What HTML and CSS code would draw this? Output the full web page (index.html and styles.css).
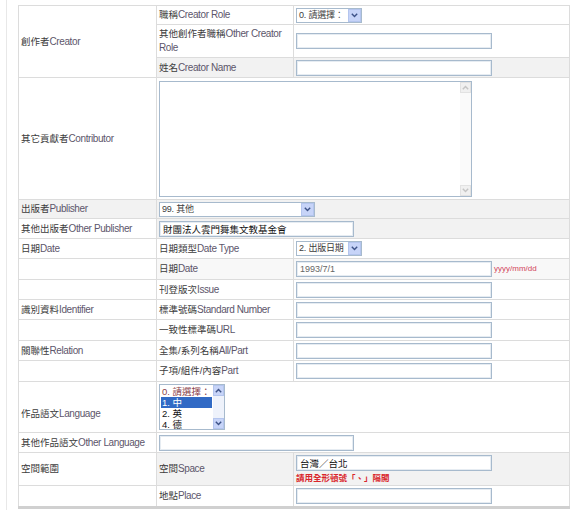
FILE: index.html
```html
<!DOCTYPE html>
<html lang="zh-Hant">
<head>
    <meta charset="UTF-8">
    <title>作品資料</title>
    <link rel="stylesheet" href="styles.css">
</head>
<body>
<div class="page">
    <table class="form-table">
        <colgroup><col class="c1"><col class="c2"><col class="c3"></colgroup>
        <!-- 創作者 -->
        <tr class="r19">
            <td rowspan="3">創作者<span class="en">Creator</span></td>
            <td>職稱<span class="en">Creator Role</span></td>
            <td>
                <div class="select w66"><span class="val">0. 請選擇：</span><span class="arrow"><svg width="7" height="5" viewBox="0 0 7 5"><path d="M0.8 0.8 L3.5 3.6 L6.2 0.8" fill="none" stroke="#3d5287" stroke-width="1.4"/></svg></span></div>
            </td>
        </tr>
        <tr class="r33">
            <td>其他創作者職稱<span class="en">Other Creator Role</span></td>
            <td><input class="input w196" type="text"></td>
        </tr>
        <tr class="r20">
            <td class="gray">姓名<span class="en">Creator Name</span></td>
            <td class="gray"><input class="input w196" type="text"></td>
        </tr>
        <!-- 貢獻者 -->
        <tr class="r122">
            <td>其它貢獻者<span class="en">Contributor</span></td>
            <td colspan="2">
                <div class="textarea">
                    <div class="scroll">
                        <span class="btn"><svg width="7" height="5" viewBox="0 0 7 5"><path d="M0.8 4.2 L3.5 1.4 L6.2 4.2" fill="none" stroke="#c4c4c4" stroke-width="1.4"/></svg></span>
                        <span class="btn"><svg width="7" height="5" viewBox="0 0 7 5"><path d="M0.8 0.8 L3.5 3.6 L6.2 0.8" fill="none" stroke="#c4c4c4" stroke-width="1.4"/></svg></span>
                    </div>
                </div>
            </td>
        </tr>
        <!-- 出版者 -->
        <tr class="r19">
            <td class="gray">出版者<span class="en">Publisher</span></td>
            <td colspan="2" class="gray">
                <div class="select w156"><span class="val">99. 其他</span><span class="arrow"><svg width="7" height="5" viewBox="0 0 7 5"><path d="M0.8 0.8 L3.5 3.6 L6.2 0.8" fill="none" stroke="#3d5287" stroke-width="1.4"/></svg></span></div>
            </td>
        </tr>
        <tr class="r20">
            <td>其他出版者<span class="en">Other Publisher</span></td>
            <td colspan="2" class="gray"><input class="input w195" type="text" value="財團法人雲門舞集文教基金會"></td>
        </tr>
        <!-- 日期 -->
        <tr class="r20">
            <td>日期<span class="en">Date</span></td>
            <td>日期類型<span class="en">Date Type</span></td>
            <td>
                <div class="select w66"><span class="val">2. 出版日期</span><span class="arrow"><svg width="7" height="5" viewBox="0 0 7 5"><path d="M0.8 0.8 L3.5 3.6 L6.2 0.8" fill="none" stroke="#3d5287" stroke-width="1.4"/></svg></span></div>
            </td>
        </tr>
        <tr class="r21">
            <td></td>
            <td class="light">日期<span class="en">Date</span></td>
            <td class="light">
                <div class="field"><input class="input w196 dim" type="text" value="1993/7/1"><span class="format">yyyy/mm/dd</span></div>
            </td>
        </tr>
        <tr class="r20">
            <td></td>
            <td>刊登版次<span class="en">Issue</span></td>
            <td><input class="input w196" type="text"></td>
        </tr>
        <!-- 識別資料 -->
        <tr class="r20">
            <td>識別資料<span class="en">Identifier</span></td>
            <td>標準號碼<span class="en">Standard Number</span></td>
            <td><input class="input w196" type="text"></td>
        </tr>
        <tr class="r21">
            <td></td>
            <td>一致性標準碼<span class="en">URL</span></td>
            <td><input class="input w196" type="text"></td>
        </tr>
        <!-- 關聯性 -->
        <tr class="r20">
            <td>關聯性<span class="en">Relation</span></td>
            <td>全集/系列名稱<span class="en">All/Part</span></td>
            <td><input class="input w196" type="text"></td>
        </tr>
        <tr class="r21">
            <td></td>
            <td>子項/組件/內容<span class="en">Part</span></td>
            <td><input class="input w196" type="text"></td>
        </tr>
        <!-- 語文 -->
        <tr class="r51">
            <td class="low">作品語文<span class="en">Language</span></td>
            <td colspan="2">
                <div class="listbox">
                    <div class="options">
                        <div class="opt first">0. 請選擇：</div>
                        <div class="opt selected">1. 中</div>
                        <div class="opt">2. 英</div>
                        <div class="opt">4. 德</div>
                    </div>
                    <div class="scroll blue">
                        <span class="btn"><svg width="7" height="5" viewBox="0 0 7 5"><path d="M0.8 4.2 L3.5 1.4 L6.2 4.2" fill="none" stroke="#3d5287" stroke-width="1.4"/></svg></span>
                        <span class="track"></span>
                        <span class="btn"><svg width="7" height="5" viewBox="0 0 7 5"><path d="M0.8 0.8 L3.5 3.6 L6.2 0.8" fill="none" stroke="#3d5287" stroke-width="1.4"/></svg></span>
                    </div>
                </div>
            </td>
        </tr>
        <tr class="r20">
            <td>其他作品語文<span class="en">Other Language</span></td>
            <td colspan="2"><input class="input w195" type="text"></td>
        </tr>
        <!-- 空間範圍 -->
        <tr class="r33">
            <td>空間範圍</td>
            <td class="gray">空間<span class="en">Space</span></td>
            <td class="gray">
                <input class="input w196" type="text" value="台灣／台北">
                <div class="hint">請用全形頓號「、」隔開</div>
            </td>
        </tr>
        <tr class="r22">
            <td></td>
            <td>地點<span class="en">Place</span></td>
            <td><input class="input w196" type="text"></td>
        </tr>
    </table>
</div>
</body>
</html>
```

FILE: styles.css
```css
body {
    margin: 0;
    font-family: "Liberation Sans", "Noto Sans CJK TC", sans-serif;
    font-size: 9.5px;
    color: #3c3c3c;
    background-color: #fff;
}
.page {
    margin-left: 6px;
    padding: 5px 0 0 11px;
    border-left: 1px solid #e8e8e8;
    height: 505px;
}
.form-table {
    border-collapse: collapse;
    table-layout: fixed;
    width: 551px;
    border-bottom: 3px solid #d0d0d0;
}
.c1 { width: 138px; }
.c2 { width: 137px; }
.c3 { width: 276px; }
.form-table td {
    border: 1px solid #dcdcdc;
    padding: 0 2px;
    vertical-align: middle;
    line-height: 14px;
    background-color: #fff;
}
.form-table td.gray { background-color: #f2f2f2; }
.form-table td.light { background-color: #f8f8f8; }
.form-table td.low { padding-top: 14px; }
.r19 { height: 19px; }
.r20 { height: 20px; }
.r21 { height: 21px; }
.r22 { height: 22px; }
.r33 { height: 33px; }
.r51 { height: 51px; }
.r122 { height: 122px; }
.en {
    font-size: 10px;
    letter-spacing: -0.4px;
    color: #5d566b;
}
.input {
    display: block;
    box-sizing: border-box;
    height: 16px;
    border: 1px solid #a7bacd;
    box-shadow: inset 0 0 0 1px #e6ecf2;
    padding: 0 3px;
    font-family: inherit;
    font-size: 9.5px;
    color: #111;
    background-color: #fff;
    outline: none;
}
.input.dim { color: #666; font-size: 9px; }
.w195 { width: 195px; }
.w196 { width: 196px; }
.w66 { width: 66px; }
.w156 { width: 156px; }
.select {
    display: flex;
    box-sizing: border-box;
    height: 15px;
    border: 1px solid #a7bacd;
    background-color: #fff;
}
.select .val {
    flex: 1;
    padding-left: 2px;
    font-size: 9px;
    letter-spacing: -0.2px;
    line-height: 13px;
    white-space: nowrap;
    overflow: hidden;
}
.select .arrow {
    width: 11px;
    flex: none;
    background-color: #c7d4f8;
    border: 1px solid #b4c5ee;
    display: flex;
    align-items: center;
    justify-content: center;
}
.textarea {
    box-sizing: border-box;
    width: 313px;
    height: 116px;
    border: 1px solid #a7bacd;
    background-color: #fff;
    display: flex;
    justify-content: flex-end;
}
.scroll {
    width: 11px;
    display: flex;
    flex-direction: column;
    justify-content: space-between;
    background-color: #fafafa;
}
.scroll .btn {
    height: 11px;
    display: flex;
    align-items: center;
    justify-content: center;
    background-color: #f0f0f0;
    border: 1px solid #e2e2e2;
    box-sizing: border-box;
}
.field {
    display: flex;
    align-items: center;
    gap: 2px;
}
.format {
    font-size: 8px;
    color: #d2455a;
}
.hint {
    margin-top: 1px;
    font-size: 8.5px;
    line-height: 12px;
    color: #d9252b;
    font-weight: bold;
}
.listbox {
    box-sizing: border-box;
    width: 66px;
    height: 46px;
    border: 1px solid #a7bacd;
    background-color: #fff;
    display: flex;
    overflow: hidden;
}
.options {
    flex: 1;
    padding: 1px 1px 0 1px;
}
.opt {
    height: 11px;
    line-height: 11px;
    padding-left: 1px;
    white-space: nowrap;
    color: #111;
}
.opt.first { color: #8a3f4a; }
.opt.selected {
    background-color: #316ac5;
    color: #fff;
}
.scroll.blue { background-color: #eef2fb; }
.scroll.blue .btn {
    background-color: #c7d4f8;
    border-color: #b4c5ee;
}
.scroll.blue .track { flex: 1; }
```
